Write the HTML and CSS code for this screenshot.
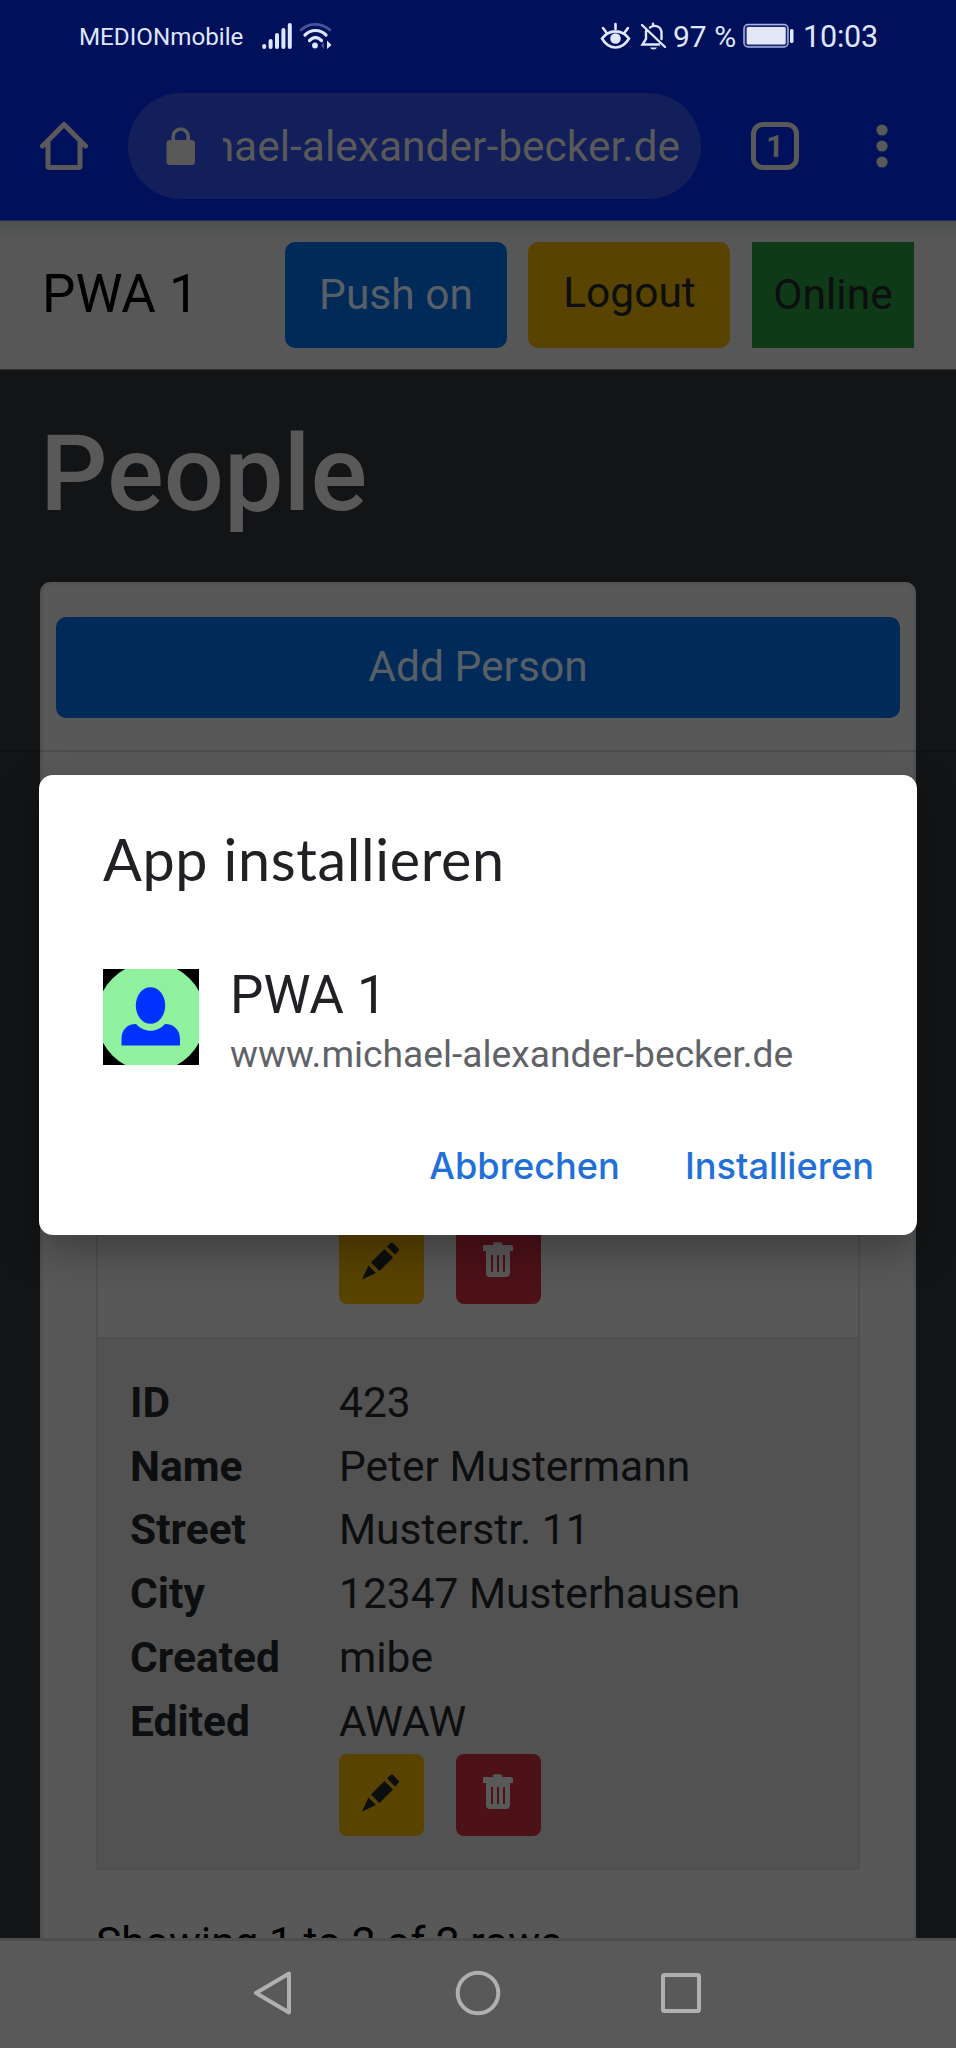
FILE: index.html
```html
<!DOCTYPE html>
<html lang="de">
<head>
<meta charset="utf-8">
<title>PWA 1</title>
<link rel="stylesheet" href="styles.css">
</head>
<body>
<div class="screen">
  <header class="browser">
    <div class="status">
      <span class="carrier">MEDIONmobile</span>
      <svg class="signal" width="30" height="28" viewBox="0 0 30 28" fill="none" stroke="#dfe6ff" stroke-width="4" stroke-linecap="round"><path d="M2.2 24v1M8.6 19v6M15 13v12M21.400 8v17M27.800 3v22"/></svg>
      <svg class="wifi" width="34" height="28" viewBox="0 0 34 28" fill="none" stroke="#dfe6ff" stroke-linecap="round"><path stroke="#46549a" stroke-width="2.600" d="M2 8C10 .5 22 .5 31 8"/><path stroke-width="3.200" d="M6 13c6-6 15-6 21 0M10.500 18.500c4-4 8-4 12 0"/><circle cx="16" cy="23.500" r="2.900" fill="#dfe6ff" stroke="none"/><path d="M25 20v7l-3-3.500z" fill="#46549a" stroke="none"/><path d="M28 18.500v8.500l4.500-4z" fill="#dfe6ff" stroke="none"/></svg>
      <svg class="eye" width="31" height="28" viewBox="0 0 31 28" fill="none" stroke="#dfe6ff" stroke-width="2.600" stroke-linecap="round"><path d="M2 16.500C9 7 22 7 29 16.500C22 28.500 9 28.500 2 16.500zM15.500 2v5M3 6l3 4M28 6l-3 4"/><circle cx="15.500" cy="16.500" r="5.300" fill="#dfe6ff" stroke="none"/></svg>
      <svg class="bell" width="27" height="28" viewBox="0 0 27 28" fill="none" stroke="#dfe6ff" stroke-width="2.400" stroke-linecap="round"><path d="M2 3l23 22M6 9v8l-3.500 5.500H19M10 5.500c5-3.500 11.500-1 11.500 5.500v6M13 1.800v2"/><path d="M10 25.500h7c-1 2.500-6 2.500-7 0z" fill="#dfe6ff" stroke="none"/></svg>
      <span class="percent">97 %</span>
      <svg class="battery" width="52" height="26" viewBox="0 0 52 26"><rect x="1" y="1.500" width="44" height="22.500" rx="4" fill="#1d2b70" stroke="#a9b4e4" stroke-width="1.500"/><rect x="3.700" y="4" width="39" height="17.500" rx="1.500" fill="#e3e8f6"/><rect x="47" y="6" width="3.500" height="14" rx="1.500" fill="#dfe6ff"/></svg>
      <span class="time">10:03</span>
    </div>
    <div class="toolbar">
      <svg class="home" width="48" height="50" viewBox="0 0 48 50" fill="none" stroke="#595959" stroke-width="5" stroke-linejoin="round" stroke-linecap="round"><path d="M2.500 25L24 3.500 45.500 25M8 21v24q0 1.500 1.500 1.500h29q1.500 0 1.500-1.500V21"/></svg>
      <div class="omnibox">
        <svg width="30" height="38" viewBox="0 0 30 38"><rect x=".5" y="13" width="28.500" height="25" rx="3.500" fill="#595959"/><path d="M7.200 14V9.500a7.500 7.500 0 0 1 15 0V14" fill="none" stroke="#595959" stroke-width="3.600"/></svg>
        <div class="url"><span>www.michael-alexander-becker.de</span></div>
      </div>
      <div class="tabs">1</div>
      <svg class="more" width="12" height="44" viewBox="0 0 12 44" fill="#595959"><circle cx="6" cy="6" r="5.600"/><circle cx="6" cy="22" r="5.600"/><circle cx="6" cy="38" r="5.600"/></svg>
    </div>
  </header>

  <main class="page">
    <nav class="navbar">
      <span class="brand">PWA 1</span>
      <button class="btn push">Push on</button>
      <button class="btn logout">Logout</button>
      <span class="btn online">Online</span>
    </nav>
    <h1>People</h1>
    <section class="card">
      <button class="add">Add Person</button>
      <div class="table">
        <div class="row first">
          <div class="actions">
            <button class="act edit"><svg width="38" height="38" viewBox="0 0 38 38" fill="#0c0e0f"><path d="M0 37.500L6.500 23.500l7.500 7.500zM9 20.500L22.500 7l8.500 8.500L17.500 29zM25 4.500L28.500 1Q30 0 31 1L36.500 6.500q1 1 0 2.500L33 12.500z"/></svg></button>
            <button class="act del"><svg width="32" height="36" viewBox="0 0 32 36"><path d="M2 3h9V1.500Q11 .3 13 .3h5q2 0 2 1.200V3h9.500q1.500 0 1.500 2.500V9H1V5.500Q.5 3 2 3z M4 9h24v22q0 4-4 4H8q-4 0-4-4z" fill="#595959"/><path d="M10 13v17M16 13v17M22 13v17" stroke="#4d1118" stroke-width="2"/></svg></button>
          </div>
        </div>
        <div class="row alt">
          <dl>
            <dt>ID</dt><dd>423</dd>
            <dt>Name</dt><dd>Peter Mustermann</dd>
            <dt>Street</dt><dd>Musterstr. 11</dd>
            <dt>City</dt><dd>12347 Musterhausen</dd>
            <dt>Created</dt><dd>mibe</dd>
            <dt>Edited</dt><dd>AWAW</dd>
          </dl>
          <div class="actions">
            <button class="act edit"><svg width="38" height="38" viewBox="0 0 38 38" fill="#0c0e0f"><path d="M0 37.500L6.500 23.500l7.500 7.500zM9 20.500L22.500 7l8.500 8.500L17.500 29zM25 4.500L28.500 1Q30 0 31 1L36.500 6.500q1 1 0 2.500L33 12.500z"/></svg></button>
            <button class="act del"><svg width="32" height="36" viewBox="0 0 32 36"><path d="M2 3h9V1.500Q11 .3 13 .3h5q2 0 2 1.200V3h9.500q1.500 0 1.500 2.500V9H1V5.500Q.5 3 2 3z M4 9h24v22q0 4-4 4H8q-4 0-4-4z" fill="#595959"/><path d="M10 13v17M16 13v17M22 13v17" stroke="#4d1118" stroke-width="2"/></svg></button>
          </div>
        </div>
      </div>
      <p class="count">Showing 1 to 2 of 2 rows</p>
    </section>
  </main>

  <footer class="sysnav">
    <svg width="44" height="46" viewBox="0 0 44 46" fill="none" stroke="#b0b0b0" stroke-width="4" stroke-linejoin="round"><path d="M4 23L37 3.500v39z"/></svg>
    <svg width="46" height="46" viewBox="0 0 46 46" fill="none" stroke="#b0b0b0" stroke-width="4"><circle cx="23" cy="23" r="20.300"/></svg>
    <svg width="44" height="46" viewBox="0 0 44 46" fill="none" stroke="#b0b0b0" stroke-width="4"><rect x="3" y="5" width="36" height="36" rx="1.500"/></svg>
  </footer>

  <div class="shade"></div>
  <div class="dialog" role="dialog">
    <h2>App installieren</h2>
    <div class="app">
      <svg width="96" height="96" viewBox="0 0 96 96"><path fill="#000" d="M0 0h96v96H0z"/><circle cx="48" cy="48" r="54.500" fill="#8ff19e"/><ellipse cx="47.500" cy="36.500" rx="14.700" ry="18.300" fill="#0032ff"/><path d="M18.500 76.500V70C18.500 61 24 55 33 55c8 9 21 9 29 0 9 0 15 6 15 15v6.500z" fill="#0032ff"/></svg>
      <div class="info">
        <div class="name">PWA 1</div>
        <div class="host">www.michael-alexander-becker.de</div>
      </div>
    </div>
    <div class="choices">
      <button>Abbrechen</button>
      <button>Installieren</button>
    </div>
  </div>
</div>
</body>
</html>
```
FILE: styles.css
```css
* { box-sizing: border-box; margin: 0; padding: 0; }
body { background: #121416; font-family: Roboto, "Liberation Sans", sans-serif; }
svg { display: block; flex: none; }
button { border: 0; background: none; font: inherit; color: inherit; }

.screen {
  position: relative;
  display: flex;
  flex-direction: column;
  width: 956px;
  height: 2048px;
  overflow: hidden;
  font-size: 42.5px;
  line-height: 63.7px;
  color: #0c0e0f;
}

/* Browser chrome */
.browser { height: 221px; flex: none; background: #00105a; border-bottom: 1px solid #222c60; }
.status {
  display: flex;
  align-items: center;
  height: 72px;
  padding-left: 79px;
  color: #dfe6ff;
  white-space: nowrap;
}
.carrier { width: 183px; font-size: 24.200px; line-height: 28px; padding-top: 2px; }
.wifi { margin-left: 7px; }
.eye { margin-left: 267px; }
.bell { margin-left: 9px; }
.percent { width: 76px; padding-left: 6px; font-size: 30px; line-height: 34px; padding-top: 2px; }
.time { margin-left: 8px; font-size: 30.500px; line-height: 34px; padding-top: 2px; letter-spacing: -.2px; }
.toolbar { display: flex; align-items: center; height: 148px; }
.home { margin-left: 40px; }
.omnibox {
  display: flex;
  align-items: center;
  width: 573px;
  height: 106px;
  margin-left: 40px;
  padding: 0 21px 0 38px;
  border-radius: 53px;
  background: #121f5a;
}
.omnibox svg { margin-right: 27px; }
.url {
  flex: 1;
  display: flex;
  justify-content: flex-end;
  overflow: hidden;
  white-space: nowrap;
  padding-top: 2px;
  color: #595959;
}
.tabs {
  width: 48px;
  height: 48px;
  margin-left: 50px;
  border: 5.500px solid #595959;
  border-radius: 12px;
  color: #595959;
  font-size: 31px;
  font-weight: 700;
  line-height: 39px;
  text-align: center;
}
.more { margin-left: 77px; }

/* Web page */
.page { flex: 1; min-height: 0; overflow: hidden; background: #121416; }
.navbar {
  display: flex;
  align-items: center;
  height: 149px;
  padding: 0 42px 1px 42px;
  background: linear-gradient(#4e504f, #575757 18px);
  border-bottom: 1px solid #333;
}
.brand { flex: 1; font-size: 53px; padding-top: 1px; color: #000; }
.btn { height: 106px; border-radius: 10px; text-align: center; }
.push { width: 222px; background: #002b59; color: #595f66; }
.logout { width: 202px; margin-left: 21px; padding: 0 0 4px 1px; background: #594300; }
.online { width: 162px; margin-left: 22px; border-radius: 0; background: #0e3a18; line-height: 106px; }
h1 { padding: 41px 40px 0; font-size: 106px; font-weight: 500; line-height: 127px; height: 212px; color: #595959; }
.card {
  display: flex;
  flex-direction: column;
  width: 876px;
  height: 1500px;
  margin-left: 40px;
  padding: 32px 13px 0;
  border: 3px solid #505152;
  border-top-color: #545455;
  border-radius: 10px;
  background: #585858;
}
.add { height: 101px; flex: none; padding-bottom: 2px; border-radius: 10px; background: #002b59; color: #595f66; }
.table { width: 764px; margin: 82px 0 0 40px; border: 2px solid #4f4f4f; }
.row.first { height: 537px; padding: 420px 0 0 241px; border-bottom: 2px solid #4e4e4e; }
.row.alt { padding: 32px 0 32px 32px; background: #525252; }
dl { display: grid; grid-template-columns: 209px 1fr; }
dt { font-weight: 700; }
dd { white-space: nowrap; }
.actions { display: flex; gap: 32px; }
.row.alt .actions { padding: 1px 0 0 209px; }
.act { display: flex; justify-content: center; align-items: flex-start; width: 85px; height: 82px; padding: 20px 1px 0 0; border-radius: 8px; }
.edit { background: #594300; }
.del { background: #4d1118; }
.count { margin: 41px 0 0 40px; color: #000; }

/* System navigation */
.sysnav {
  display: flex;
  justify-content: center;
  gap: 159px;
  height: 110px;
  flex: none;
  padding-top: 29px;
  background: #595959;
  border-top: 3px solid #4e4e4e;
}

/* Install prompt */
.shade {
  position: absolute;
  left: 0;
  top: 750px;
  width: 956px;
  height: 2px;
  background: rgba(0, 0, 0, .12);
}
.dialog {
  position: absolute;
  left: 39px;
  top: 775px;
  width: 878px;
  height: 460px;
  padding: 49px 43px 0 64px;
  border-radius: 14px;
  background: #fff;
  box-shadow: 0 16px 40px rgba(0, 0, 0, .3);
  color: #202124;
}
h2 { font-family: Lato, Roboto, sans-serif; font-size: 57.500px; font-weight: 400; line-height: 70px; letter-spacing: .65px; }
.app { display: flex; gap: 31px; margin-top: 75px; }
.info { margin-top: -5px; }
.name { font-size: 53px; line-height: 62px; }
.host { font-size: 37.200px; line-height: 44px; margin-top: 6px; color: #5f6368; }
.choices { display: flex; justify-content: flex-end; gap: 65px; margin-top: 64px; color: #216fd8; }
.choices button { font-family: Inter, Roboto, sans-serif; font-size: 36.200px; font-weight: 500; line-height: 52px; }
```
